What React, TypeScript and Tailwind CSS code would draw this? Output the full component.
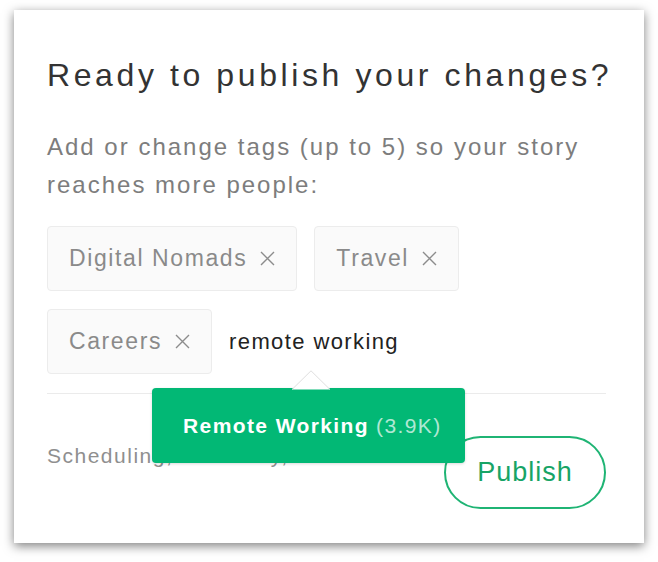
import React from "react";

const tags = ["Digital Nomads", "Travel", "Careers"];

function Cross() {
  return (
    <svg width="17" height="17" viewBox="0 0 17 17" className="shrink-0">
      <path d="M2 2 L15 15 M15 2 L2 15" stroke="#8c8c8c" strokeWidth="1.4" fill="none" />
    </svg>
  );
}

function Tag({ label }: { label: string }) {
  return (
    <div className="flex h-[65px] items-center gap-[12px] rounded-[4px] border border-[#ececec] bg-[#fafafa] pl-[21px] pr-[20px] text-[23px] tracking-[1.6px] text-[#8a8a8a]">
      <span>{label}</span>
      <Cross />
    </div>
  );
}

export default function App() {
  return (
    <div className="min-h-screen bg-white pl-[14px] pt-[10px] font-['Liberation_Sans',Arial,sans-serif]">
      <div className="relative flex h-[533px] w-[630px] flex-col bg-white pl-[33px] pr-[38px] pt-[47px] shadow-[0_3px_10px_rgba(0,0,0,0.5)]">
        <h1 className="whitespace-nowrap text-[32px] leading-[36px] tracking-[3.6px] text-[#333333]">
          Ready to publish your changes?
        </h1>

        <p className="mt-[35px] whitespace-nowrap text-[24px] leading-[38px] tracking-[2px] text-[#7d7d7d]">
          Add or change tags (up to 5) so your story
          <br />
          reaches more people:
        </p>

        <div className="mt-[22px] flex flex-wrap items-center gap-x-[17px] gap-y-[18px]">
          {tags.map((t) => (
            <Tag key={t} label={t} />
          ))}
          <span className="text-[22px] tracking-[1.4px] text-[#222222]">remote working</span>
        </div>

        <div className="mt-[19px] h-px w-full bg-[#ebebeb]" />

        <div className="mt-[42px] flex items-start justify-between">
          <span className="mt-[4px] text-[21px] tracking-[1.5px] text-[#8f8f8f]">
            Scheduling, discovery, and more
          </span>
          <button className="flex h-[73px] w-[162px] items-center justify-center rounded-full border-2 border-[#1fb474] text-[27px] tracking-[1px] text-[#17a466]">
            Publish
          </button>
        </div>

        {/* suggestion popover */}
        <div className="absolute left-[138px] top-[360px]">
          <svg width="38" height="20" viewBox="0 0 38 20" className="ml-[140px] block">
            <path d="M0 19.5 L19 0.8 L38 19.5" fill="#ffffff" stroke="#dedede" strokeWidth="1" />
          </svg>
          <div className="-mt-[2px] flex h-[75px] w-[313px] items-center rounded-[4px] bg-[#02b875] pl-[31px] text-[21px] tracking-[1.4px] text-white shadow-[0_1px_3px_rgba(0,0,0,0.15)]">
            <span className="font-bold">Remote Working</span>
            <span className="ml-[7px] text-white/70">(3.9K)</span>
          </div>
        </div>
      </div>
    </div>
  );
}
